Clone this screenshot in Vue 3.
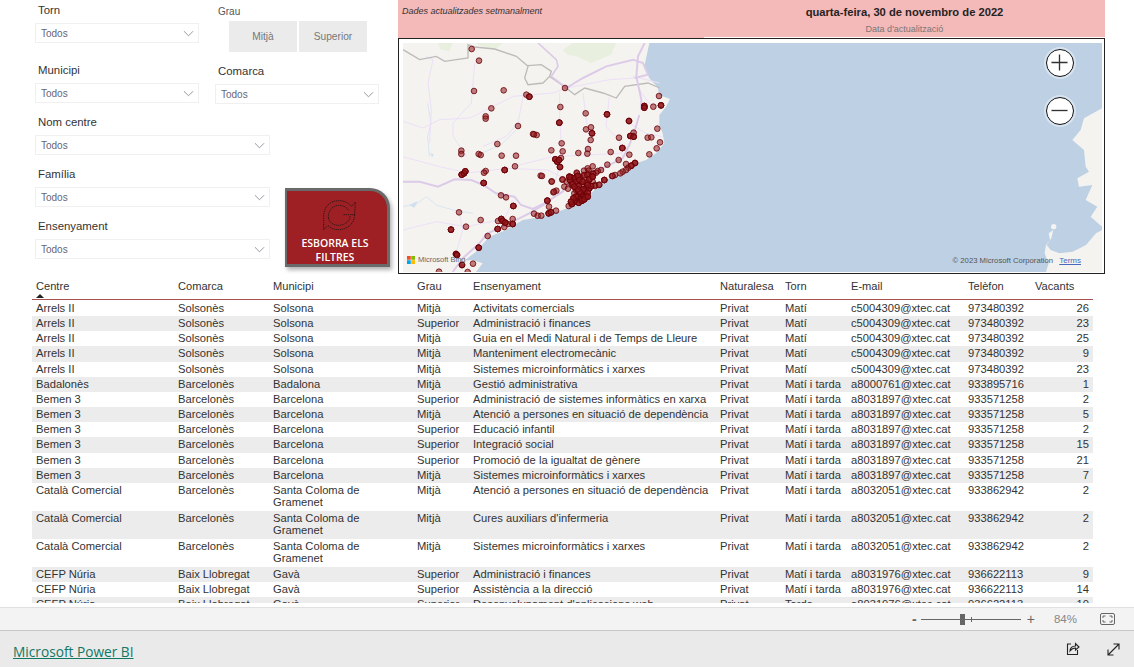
<template>
  <div class="page">
    <div class="report">
      <div class="top">
        <div class="filters">
          <div class="line first">
            <div class="field small">
              <div class="lbl">Torn</div>
              <div class="select">Todos<svg class="chev" viewBox="0 0 12 7"><path d="M1 1l5 5 5-5" /></svg></div>
            </div>
            <div class="grau">
              <div class="lbl grau-lbl">Grau</div>
              <div class="btns">
                <div class="gbtn">Mitjà</div>
                <div class="gbtn">Superior</div>
              </div>
            </div>
          </div>
          <div class="line">
            <div class="field small">
              <div class="lbl">Municipi</div>
              <div class="select">Todos<svg class="chev" viewBox="0 0 12 7"><path d="M1 1l5 5 5-5" /></svg></div>
            </div>
            <div class="field small comarca">
              <div class="lbl">Comarca</div>
              <div class="select">Todos<svg class="chev" viewBox="0 0 12 7"><path d="M1 1l5 5 5-5" /></svg></div>
            </div>
          </div>
          <div class="lower">
            <div class="stack">
              <div class="field wide" v-for="f in ['Nom centre', 'Família', 'Ensenyament']" :key="f">
                <div class="lbl">{{ f }}</div>
                <div class="select">Todos<svg class="chev" viewBox="0 0 12 7"><path d="M1 1l5 5 5-5" /></svg></div>
              </div>
            </div>
            <div class="clear">
              <svg class="clear-ico" viewBox="125 45 110 100">
                <path d="M133 140V100C133 72 152 53 178 53 195 53 208 60 217 70L228 57 226 95H190" />
                <path d="M226 95C226 120 205 140 178 140 165 140 155 137 146 128L133 140" />
                <path d="M147 105C145 85 160 67 178 67 192 67 202 73 208 82" />
                <path d="M212 100C212 115 195 127 178 127 160 127 150 118 147 105" />
              </svg>
              <div class="clear-txt">ESBORRA ELS<br />FILTRES</div>
            </div>
          </div>
        </div>
        <div class="right">
          <div class="banner">
            <div class="note">Dades actualitzades setmanalment</div>
            <div class="updated">
              <div class="date">quarta-feira, 30 de novembro de 2022</div>
              <div class="sub">Data d'actualització</div>
            </div>
          </div>
          <div class="mapbox">
            <div class="map">
              <svg class="mapsvg" viewBox="21 129 2097 687">
                <rect x="21" y="129" width="2097" height="687" fill="#bdd0e4" />
                <path fill="#f5f3f0" d="M21 129H760L745 200 760 235 785 262 790 285 822 297 810 320 790 345 790 375 800 400 805 430 780 460 750 480 720 490 690 515 640 535 600 565 575 590 540 615 500 630 440 650 380 660 330 690 280 710 240 755 205 782 230 780 260 790 240 816H21Z" />
                <path fill="#f5f3f0" d="M2118 325L2064 355 2054 390 2029 420 2064 450 2069 500 2079 515 2044 535 2049 560 2089 555 2069 600 2104 620 2084 650 2118 680Z" />
                <path fill="#f5f3f0" d="M2118 816H1950L1958 790 1946 760 1950 735 1962 720 1958 700 1972 690 1966 715 1952 735 1964 750 1990 760 2030 755 2070 735 2100 700 2118 690Z" />
                <path fill="#f5f3f0" d="M1965 680a8 8 0 1 1 16 0a8 8 0 1 1-16 0Z" />
                <path fill="#e9efdf" d="M125 129h45l-10 25-25-5ZM240 129h80l-20 18-45-8ZM500 150l30-21h130l-15 35-60 25-45-20-25-5Z" />
                <path class="water" d="M100 470l-5-60 10-40-10-60M255 460l60-25 45-45M21 620l40-8 30-22 30 25 50 15 60 10" />
                <path fill="#cfe0ee" d="M102 458l6 14 6-8ZM40 615l25-12-10 20Z" />
                <path class="thin" d="M91 169l20 10-15 70 10 80-5 100M236 189l-10 120-55 60v40l40 60M21 364l60 20 50-25 90-5 130-65 120-10 40-15M381 289l-15 80-35 40-70 30M491 279v80l5 70-5 70-15 50M561 279l10 80 10 60-15 50M511 264l130-25 80-5M711 229l80 20M21 690l100-25 90 15 100-20M205 520l130-15 120 5 40 20M350 500l120-30 200-10 30-20M190 640l10 50-20 70M350 600l-25 60M700 370l50 30 50 10M20 470l110 30 70 15M640 290l-10 90 40 40 10 50M730 270l30 40 30 10" />
                <path class="bound" d="M21 149l50 30 50-10 25 15 70-10V134l20 7 60 6 65 22 35 30-10 35 10 20 45-5 20-20 50 35 25 20 30-20 55 15 40 15 25-35 70-10 35 15" />
                <path class="bound" d="M396 197l40-3 30 20-5 15" />
                <path class="road" d="M21 545h50l55 15 50-22 50 2 36 15 38 25 55 10 20 25 35 12 35-17 55-35 30-40 70-20 80-40 20-40 15-40 15-50" />
                <path class="road" d="M170 816l30-41 50-45 25-30 55-25 70-35 50-30" />
                <path class="road" d="M746 129l-20 40-5 60 15 70 0 30M511 264l50-30 70-35 80-20 30 10 15 35-40 10" />
                <path class="road mid" d="M426 129l55 50 5 20-20 30 45 35" />
                <circle v-for="(d, i) in dots" :key="i" :cx="d[0]" :cy="d[1]" r="8.500" class="dot" />
              </svg>
              <div class="bing">
                <svg class="ms" viewBox="0 0 10 10">
                  <rect width="4.7" height="4.7" fill="#f25022" />
                  <rect x="5.3" width="4.7" height="4.7" fill="#7fba00" />
                  <rect y="5.3" width="4.7" height="4.7" fill="#00a4ef" />
                  <rect x="5.3" y="5.3" width="4.7" height="4.7" fill="#ffb900" />
                </svg>
                Microsoft Bing
              </div>
              <div class="zooms">
                <div class="zbtn"><svg viewBox="0 0 28 28"><path d="M14 5v18M5 14h18" /></svg></div>
                <div class="zbtn"><svg viewBox="0 0 28 28"><path d="M5 14h18" /></svg></div>
              </div>
              <div class="copy">© 2023 Microsoft Corporation <a>Terms</a></div>
            </div>
          </div>
        </div>
      </div>
      <div class="tablewrap">
        <div class="thead row">
          <div v-for="h in headers" :key="h" class="cell">{{ h }}</div>
          <span class="sort"></span>
        </div>
        <div v-for="(r, i) in rows" :key="i" class="row" :class="{ even: i % 2 === 1, tall: r[2].length > 20 }">
          <div v-for="(c, j) in r" :key="j" class="cell" :class="{ mun: j === 2, num: j === 9 }">{{ c }}</div>
        </div>
        <div class="thumb"></div>
      </div>
    </div>
    <div class="zoombar">
      <span class="minus">-</span>
      <div class="slider"><span class="knob"></span><span class="tick"></span></div>
      <span class="plus">+</span>
      <span class="pct">84%</span>
      <svg class="fit" viewBox="0 0 15 12">
        <rect x="0.5" y="0.5" width="14" height="11" rx="1.5" />
        <path d="M3 5V3h2.500M9.500 3H12v2M12 7v2H9.500M5.500 9H3V7" />
      </svg>
    </div>
    <div class="footer">
      <a class="brand">Microsoft Power BI</a>
      <div class="foot-icons">
        <svg class="share" viewBox="0 0 14 14">
          <path d="M5 2H1.500v10.500h10V8" />
          <path d="M4 9c0-3 2-5 5.500-5V1.500L13 5 9.500 8V6C7 6 5.500 7 4 9Z" />
        </svg>
        <svg class="expand" viewBox="0 0 13 13">
          <path d="M1 12L12 1M6.500 1H12v5.500M1 6.500V12h5.500" />
        </svg>
      </div>
    </div>
  </div>
</template>

<script setup>
const headers = ['Centre', 'Comarca', 'Municipi', 'Grau', 'Ensenyament', 'Naturalesa', 'Torn', 'E-mail', 'Telèfon', 'Vacants']

const arrels = ['Arrels II', 'Solsonès', 'Solsona']
const arrelsEnd = ['Privat', 'Matí', 'c5004309@xtec.cat', '973480392']
const bemen = ['Bemen 3', 'Barcelonès', 'Barcelona']
const bemenEnd = ['Privat', 'Matí i tarda', 'a8031897@xtec.cat', '933571258']
const catala = ['Català Comercial', 'Barcelonès', 'Santa Coloma de Gramenet']
const catalaEnd = ['Privat', 'Matí i tarda', 'a8032051@xtec.cat', '933862942']
const nuria = ['CEFP Núria', 'Baix Llobregat', 'Gavà']

const rows = [
  [...arrels, 'Mitjà', 'Activitats comercials', ...arrelsEnd, 26],
  [...arrels, 'Superior', 'Administració i finances', ...arrelsEnd, 23],
  [...arrels, 'Mitjà', 'Guia en el Medi Natural i de Temps de Lleure', ...arrelsEnd, 25],
  [...arrels, 'Mitjà', 'Manteniment electromecànic', ...arrelsEnd, 9],
  [...arrels, 'Mitjà', 'Sistemes microinformàtics i xarxes', ...arrelsEnd, 23],
  ['Badalonès', 'Barcelonès', 'Badalona', 'Mitjà', 'Gestió administrativa', 'Privat', 'Matí i tarda', 'a8000761@xtec.cat', '933895716', 1],
  [...bemen, 'Superior', 'Administració de sistemes informàtics en xarxa', ...bemenEnd, 2],
  [...bemen, 'Mitjà', 'Atenció a persones en situació de dependència', ...bemenEnd, 5],
  [...bemen, 'Superior', 'Educació infantil', ...bemenEnd, 2],
  [...bemen, 'Superior', 'Integració social', ...bemenEnd, 15],
  [...bemen, 'Superior', 'Promoció de la igualtat de gènere', ...bemenEnd, 21],
  [...bemen, 'Mitjà', 'Sistemes microinformàtics i xarxes', ...bemenEnd, 7],
  [...catala, 'Mitjà', 'Atenció a persones en situació de dependència', ...catalaEnd, 2],
  [...catala, 'Mitjà', 'Cures auxiliars d\'infermeria', ...catalaEnd, 2],
  [...catala, 'Mitjà', 'Sistemes microinformàtics i xarxes', ...catalaEnd, 2],
  [...nuria, 'Superior', 'Administració i finances', 'Privat', 'Matí i tarda', 'a8031976@xtec.cat', '936622113', 9],
  [...nuria, 'Superior', 'Assistència a la direcció', 'Privat', 'Matí i tarda', 'a8031976@xtec.cat', '936622113', 14],
  [...nuria, 'Superior', 'Desenvolupament d\'aplicacions web', 'Privat', 'Tarda', 'a8031976@xtec.cat', '936622113', 10]
]

// punts del mapa, en coordenades del viewBox
const light = [
  [227, 147], [249, 182], [234, 273], [323, 271], [391, 284], [507, 264], [493, 321], [286, 325], [269, 349], [269, 356],
  [569, 340], [366, 378], [789, 288], [772, 320], [784, 386], [570, 388], [585, 382], [411, 402], [422, 405], [414, 403],
  [669, 413], [713, 398], [755, 413], [766, 412], [792, 427], [584, 420], [497, 430], [304, 432], [196, 452], [196, 462],
  [248, 462], [254, 465], [317, 467], [360, 467], [466, 451], [500, 454], [576, 447], [574, 461], [547, 459], [644, 456],
  [782, 445], [760, 463], [700, 464], [495, 474], [357, 499], [269, 513], [264, 518], [634, 494], [668, 480], [690, 492],
  [697, 503], [690, 510], [680, 515], [673, 520], [657, 525], [648, 528], [590, 499], [615, 510], [605, 513], [434, 527],
  [438, 528], [467, 544], [499, 539], [315, 586], [330, 592], [481, 572], [472, 577], [459, 620], [480, 632], [414, 641],
  [425, 647], [436, 647], [189, 637], [254, 660], [210, 680], [306, 663], [336, 672], [325, 681], [350, 657], [275, 708],
  [231, 791], [129, 815], [215, 816], [564, 512], [575, 505], [543, 520], [565, 527], [578, 512], [597, 555], [609, 555],
  [583, 530], [505, 560], [516, 566], [527, 555], [557, 555], [535, 580], [518, 618], [527, 612], [590, 520], [600, 518],
  [552, 530], [575, 522], [512, 545], [590, 545], [540, 570], [592, 522], [564, 525], [574, 525], [542, 518], [500, 538],
  [467, 545], [474, 575], [597, 558], [610, 554], [650, 528]
]
const dark = [
  [400, 290], [633, 343], [490, 368], [699, 363], [745, 318], [745, 323], [795, 316], [588, 400], [703, 408], [713, 410],
  [679, 444], [478, 478], [484, 485], [489, 480], [492, 501], [326, 510], [197, 524], [204, 520], [208, 514], [717, 489],
  [706, 497], [625, 540], [263, 549], [352, 618], [454, 602], [458, 640], [465, 637], [165, 689], [316, 657], [320, 663],
  [328, 668], [305, 687], [350, 672], [248, 743], [180, 762], [183, 765], [198, 795], [525, 532], [535, 535], [545, 528],
  [522, 540], [540, 545], [550, 540], [530, 552], [548, 558], [572, 548], [580, 538], [570, 565], [580, 565], [565, 575],
  [575, 578], [555, 580], [560, 590], [568, 590], [545, 590], [552, 598], [540, 600], [548, 608], [535, 605], [558, 602],
  [528, 612], [585, 558], [575, 555], [562, 568], [550, 575], [540, 590], [565, 598], [545, 568], [535, 560], [590, 530],
  [520, 530], [560, 545], [575, 590], [532, 595], [525, 605]
]
const dots = [...light, ...dark, ...dark, ...dark]
</script>

<style>
body {
  margin: 0;
  overflow: hidden;
}
</style>

<style scoped>
.page {
  width: 1134px;
  height: 667px;
  display: flex;
  flex-direction: column;
  background: #fff;
  font-family: "Liberation Sans", Arial, sans-serif;
  overflow: hidden;
}

.report {
  height: 607px;
  flex: none;
}

.top {
  display: flex;
  height: 278px;
}

.filters {
  width: 363px;
  padding-left: 35px;
  flex: none;
}

.line {
  display: flex;
  height: 60px;
}

.field {
  height: 43px;
}

.small {
  width: 164px;
}

.wide {
  width: 235px;
  height: 52px;
}

.lbl {
  height: 23px;
  line-height: 20px;
  padding-left: 3px;
  font-size: 11.400px;
  color: #333;
}

.select {
  position: relative;
  height: 20px;
  box-sizing: border-box;
  border: 1px solid #f0f0f0;
  padding-left: 5px;
  line-height: 19px;
  font-size: 10px;
  color: #667;
}

.chev {
  position: absolute;
  right: 4px;
  top: 6px;
  width: 11px;
  height: 7px;
}

.chev path {
  fill: none;
  stroke: #8a8f96;
  stroke-width: 1;
}

.comarca {
  margin-left: 16px;
  margin-top: 1px;
}

.grau {
  margin-left: 19px;
}

.grau-lbl {
  height: 21px;
  line-height: 23px;
  padding-left: 0;
  font-size: 10px;
  color: #555;
}

.btns {
  display: flex;
  gap: 2px;
  margin-left: 11px;
}

.gbtn {
  width: 68px;
  height: 31px;
  background: #ebebeb;
  color: #777;
  font-size: 10.200px;
  line-height: 31px;
  text-align: center;
}

.lower {
  display: flex;
  margin-top: -8px;
}

.stack {
  width: 235px;
}

.clear {
  margin-left: 15px;
  margin-top: 76px;
  width: 105px;
  height: 79px;
  box-sizing: border-box;
  background: #9e2024;
  border: 3px solid #6a6a6a;
  border-left-width: 2px;
  border-top-right-radius: 20px;
  box-shadow: 2px 3px 4px rgba(0, 0, 0, 0.3);
  color: #fff;
  text-align: center;
  flex: none;
}

.clear-ico {
  display: block;
  width: 36.700px;
  height: 33.300px;
  margin: 7px 0 0 33.700px;
}

.clear-ico path {
  fill: none;
  stroke: #111;
  stroke-width: 2.200;
  stroke-dasharray: 4 2.500;
}

.clear-txt {
  font-family: "Open Sans", sans-serif;
  font-size: 10.500px;
  font-weight: 600;
  line-height: 14px;
  margin: 5px 4px 0 0;
}

.right {
  width: 707px;
  flex: none;
}

.banner {
  display: flex;
  height: 38px;
}

.note {
  width: 306px;
  box-sizing: border-box;
  padding: 5px 0 0 4px;
  background: #f4b9b9;
  font-size: 9px;
  line-height: 12px;
  font-style: italic;
  color: #333;
}

.updated {
  flex: 1;
  height: 37px;
  background: #f4b9b9;
  text-align: center;
  overflow: hidden;
}

.date {
  margin-top: 5px;
  font-size: 11.200px;
  line-height: 15px;
  font-weight: bold;
  color: #252423;
}

.sub {
  margin-top: 2px;
  font-size: 9px;
  line-height: 14px;
  color: #777;
}

.mapbox {
  box-sizing: border-box;
  height: 236px;
  border: 1px solid #222;
  padding: 4px 2px 1px 4px;
}

.map {
  position: relative;
  width: 699px;
  height: 229px;
  overflow: hidden;
}

.mapsvg {
  display: block;
  width: 699px;
  height: 229px;
}

.thin {
  fill: none;
  stroke: #ecdff8;
  stroke-width: 3;
}

.water {
  fill: none;
  stroke: #d2e2f0;
  stroke-width: 2.500;
}

.bound {
  fill: none;
  stroke: #bdbbb8;
  stroke-width: 4;
}

.road {
  fill: none;
  stroke: #dccbe8;
  stroke-width: 6;
}

.road.mid {
  stroke-width: 5;
}

.dot {
  fill: rgba(145, 25, 30, 0.55);
  stroke: rgba(105, 0, 5, 0.8);
  stroke-width: 3;
}

.bing {
  position: absolute;
  left: 4px;
  bottom: 8px;
  display: flex;
  align-items: center;
  gap: 3px;
  font-size: 7.500px;
  color: #666;
}

.ms {
  width: 8px;
  height: 8px;
}

.zooms {
  position: absolute;
  left: 643px;
  top: 6px;
  display: flex;
  flex-direction: column;
  gap: 19.500px;
}

.zbtn {
  width: 28px;
  height: 28px;
  box-sizing: border-box;
  background: #fff;
  border: 1.500px solid #111;
  border-radius: 50%;
  box-shadow: 0 0 0 2px rgba(255, 255, 255, 0.4);
}

.zbtn svg {
  display: block;
  width: 25px;
  height: 25px;
}

.zbtn path {
  stroke: #333;
  stroke-width: 1.500;
  fill: none;
}

.copy {
  position: absolute;
  right: 21px;
  bottom: 6px;
  font-size: 7.700px;
  line-height: 10px;
  color: #555;
  white-space: pre;
}

.copy a {
  margin-left: 4px;
  font-size: 8px;
  color: #4a69bd;
  text-decoration: underline;
}

.tablewrap {
  position: relative;
  height: 325px;
  padding-left: 32px;
  width: 1061px;
  overflow: hidden;
}

.row {
  display: grid;
  grid-template-columns: 146px 95px 144px 56px 247px 65px 66px 117px 67px 58px;
  min-height: 15.170px;
  font-size: 11.200px;
  line-height: 12px;
  color: #333;
}

.row .cell {
  padding-top: 1px;
  white-space: nowrap;
}

.row .cell:first-child {
  padding-left: 4px;
}

.row .mun {
  white-space: normal;
  padding-right: 40px;
}

.row .num {
  text-align: right;
  padding-right: 4px;
}

.even {
  background: #ececec;
}

.tall {
  height: 28px;
}

.thead {
  position: relative;
  height: 22px;
  min-height: 22px;
  box-sizing: border-box;
  border-bottom: 1px solid #a85050;
  margin-bottom: 1px;
}

.thead .cell {
  padding-top: 2px;
  font-size: 11.100px;
}

.sort {
  position: absolute;
  left: 4px;
  top: 16px;
  width: 0;
  height: 0;
  border-left: 4px solid transparent;
  border-right: 4px solid transparent;
  border-bottom: 4px solid #222;
}

.thumb {
  position: absolute;
  left: 1095px;
  top: 2px;
  width: 6px;
  height: 11px;
  border-radius: 3px;
  background: #b3b3b3;
}

.zoombar {
  position: relative;
  display: flex;
  align-items: center;
  justify-content: flex-end;
  height: 24px;
  box-sizing: border-box;
  background: #f3f3f3;
  border-top: 1px solid #e0e0e0;
  border-bottom: 1px solid #c9c9c9;
  padding-right: 19px;
  color: #666;
}

.minus {
  font-size: 14px;
  font-weight: bold;
  margin-right: 4px;
}

.slider {
  position: relative;
  width: 100px;
  height: 1px;
  background: #666;
}

.knob {
  position: absolute;
  left: 39px;
  top: -5px;
  width: 5px;
  height: 11px;
  background: #666;
}

.tick {
  position: absolute;
  left: 50px;
  top: -2px;
  width: 1px;
  height: 5px;
  background: #666;
}

.plus {
  font-size: 14px;
  margin-left: 6px;
}

.pct {
  font-size: 11.500px;
  color: #888;
  margin-left: 19px;
  margin-right: 23px;
}

.fit {
  width: 15px;
  height: 12px;
}

.fit rect,
.fit path {
  fill: none;
  stroke: #666;
  stroke-width: 1;
}

.footer {
  display: flex;
  flex: 1;
  align-items: center;
  justify-content: space-between;
  background: #eaeaea;
  padding: 4px 14px 0 13px;
}

.brand {
  font-family: "Open Sans", sans-serif;
  font-size: 13.700px;
  color: #117865;
  text-decoration: underline;
}

.foot-icons {
  display: flex;
  gap: 27px;
  align-items: center;
  margin-top: -4px;
}

.share {
  width: 14px;
  height: 14px;
}

.expand {
  width: 13px;
  height: 13px;
}

.share path,
.expand path {
  fill: none;
  stroke: #252423;
  stroke-width: 1.100;
}
</style>
